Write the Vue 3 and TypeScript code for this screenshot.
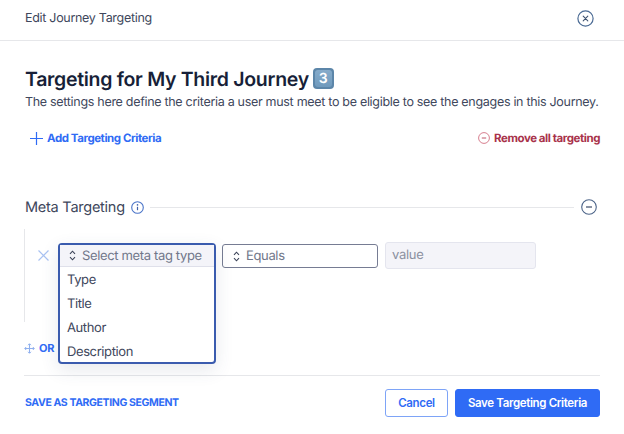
<script setup lang="ts">
const options: string[] = ['Type', 'Title', 'Author', 'Description']
</script>

<template>
  <div class="page">
    <header class="top">
      <span class="top-title">Edit Journey Targeting</span>
      <svg class="close" width="17" height="17" viewBox="0 0 17 17" fill="none">
        <circle cx="8.5" cy="8.5" r="7.6" stroke="#4a6a94" stroke-width="1.2" />
        <path d="M6.2 6.2l4.6 4.6M10.8 6.2l-4.6 4.6" stroke="#3e5270" stroke-width="1.1" stroke-linecap="round" />
      </svg>
    </header>

    <section class="intro">
      <h1 class="heading">
        Targeting for My Third Journey
        <span class="keycap"><span class="keycap-inner">3</span></span>
      </h1>
      <p class="desc">The settings here define the criteria a user must meet to be eligible to see the engages in this Journey.</p>
    </section>

    <div class="actions">
      <a class="add">
        <svg width="13" height="13" viewBox="0 0 13 13" fill="none">
          <path d="M6.5 0v13M0 6.5h13" stroke="#2f6bf5" stroke-width="1.2" />
        </svg>
        Add Targeting Criteria
      </a>
      <a class="remove">
        <svg width="12" height="12" viewBox="0 0 12 12" fill="none">
          <circle cx="6" cy="6" r="5.4" stroke="#d77f8f" stroke-width="1" />
          <path d="M3.8 6h4.4" stroke="#c0566b" stroke-width="1" />
        </svg>
        Remove all targeting
      </a>
    </div>

    <section class="meta">
      <div class="meta-head">
        <span class="meta-title">Meta Targeting</span>
        <svg class="info" width="13" height="13" viewBox="0 0 13 13" fill="none">
          <circle cx="6.5" cy="6.5" r="5.8" stroke="#4a74c8" stroke-width="1.1" />
          <path d="M6.5 5.8v3.4" stroke="#3f5fa8" stroke-width="1.2" />
          <circle cx="6.5" cy="3.9" r="0.8" fill="#3f5fa8" />
        </svg>
        <span class="rule"></span>
        <svg width="16" height="16" viewBox="0 0 16 16" fill="none">
          <circle cx="8" cy="8" r="7.3" stroke="#4c6488" stroke-width="1.1" />
          <path d="M5 8h6" stroke="#3c4c68" stroke-width="1.2" />
        </svg>
      </div>

      <div class="group">
        <div class="row">
          <svg class="x" width="11" height="11" viewBox="0 0 11 11" fill="none">
            <path d="M.5.5l10 10M10.5.5l-10 10" stroke="#a9c2f2" stroke-width="1.2" />
          </svg>
          <div class="select-slot">
            <div class="dropdown">
              <div class="dropdown-head">
                <svg class="updown" width="7" height="11" viewBox="0 0 7 11" fill="none">
                  <path d="M1 3.8L3.5 1.2 6 3.8M1 7.2l2.5 2.6L6 7.2" stroke="#3b4358" stroke-width="1.1" />
                </svg>
                Select meta tag type
              </div>
              <div class="options">
                <div v-for="o in options" :key="o" class="option">{{ o }}</div>
              </div>
            </div>
          </div>
          <div class="equals">
            <svg class="updown" width="7" height="11" viewBox="0 0 7 11" fill="none">
              <path d="M1 3.8L3.5 1.2 6 3.8M1 7.2l2.5 2.6L6 7.2" stroke="#3b4358" stroke-width="1.1" />
            </svg>
            Equals
          </div>
          <div class="value">value</div>
        </div>
      </div>
      <div class="or">
        <svg width="11" height="11" viewBox="0 0 11 11" fill="none">
          <path d="M5.5 1v9M1 5.5h9" stroke="#8fb0ee" stroke-width="1.1" />
          <path d="M4 2.2l1.5-1.5L7 2.2M4 8.8l1.5 1.5L7 8.8M2.2 4L.7 5.5 2.2 7M8.8 4l1.5 1.5L8.8 7" stroke="#8fb0ee" stroke-width="1" />
        </svg>
        <span>OR</span>
      </div>
    </section>

    <footer class="foot">
      <a class="segment">SAVE AS TARGETING SEGMENT</a>
      <div class="btns">
        <button class="cancel">Cancel</button>
        <button class="save">Save Targeting Criteria</button>
      </div>
    </footer>
  </div>
</template>

<style>
html, body { margin: 0; background: #fff; }
</style>

<style scoped>
.page {
  width: 624px;
  height: 434px;
  overflow: hidden;
  font-family: Inter, "Liberation Sans", sans-serif;
  text-rendering: geometricPrecision;
  color: #40475c;
  background: #fff;
  box-sizing: border-box;
}
.top {
  height: 41px;
  box-sizing: border-box;
  border-bottom: 1px solid #e6e7ea;
  display: flex;
  align-items: center;
  justify-content: space-between;
  padding: 0 30px 3px 25px;
}
.top-title { font-size: 12.5px; letter-spacing: -0.3px; color: #40475c; }
.intro { padding: 25px 24px 0 25px; }
.heading {
  margin: 0;
  font-size: 19.5px;
  line-height: 26px;
  font-weight: 600;
  letter-spacing: -0.3px;
  color: #171f38;
  display: flex;
  align-items: center;
  gap: 4px;
  white-space: nowrap;
}
.keycap {
  width: 21px;
  height: 21px;
  margin-top: -2px;
  border-radius: 4px;
  background: #5c86a9;
  display: flex;
  align-items: center;
  justify-content: center;
}
.keycap-inner {
  width: 17px;
  height: 17px;
  border-radius: 3px;
  background: linear-gradient(#86abca, #6f9abd);
  color: #fff;
  font-size: 14px;
  line-height: 17px;
  font-weight: 600;
  letter-spacing: 0;
  text-align: center;
}
.desc { margin: 2px 0 0; font-size: 12.5px; letter-spacing: -0.3px; line-height: 18px; color: #40475c; white-space: nowrap; }
.actions {
  display: flex;
  justify-content: space-between;
  align-items: center;
  padding: 19px 24px 0 30px;
  font-size: 11.5px;
  font-weight: 700;
  letter-spacing: -0.44px;
}
.add, .remove { display: flex; align-items: center; gap: 4px; }
.add { color: #2f6bf5; }
.remove { color: #a8324a; }
.meta { padding: 52px 24px 0 25px; }
.meta-head { display: flex; align-items: center; height: 20px; margin-right: 3px; }
.meta-title { font-size: 14.5px; letter-spacing: -0.25px; color: #40475c; }
.info { margin-left: 6px; }
.rule { flex: 1; height: 1px; background: #e6e7ea; margin: 0 7px 0 6px; }
.group {
  margin: 12px 0 0 -1px;
  height: 93px;
  border-left: 1px solid #e6e7ea;
  box-sizing: border-box;
  padding: 14px 0 0 13px;
}
.row { display: flex; align-items: flex-start; }
.x { margin-top: 7px; margin-right: 9px; flex: none; }
.select-slot { width: 158px; height: 25px; position: relative; flex: none; margin-right: 6px; }
.dropdown {
  position: absolute;
  left: 0;
  top: 0;
  width: 158px;
  height: 121px;
  box-sizing: border-box;
  border: 2px solid #3a5bae;
  border-radius: 4px;
  background: #fff;
  box-shadow: 0 6px 18px rgba(60, 70, 110, 0.12);
  z-index: 2;
}
.dropdown-head {
  height: 22px;
  background: #f4f4f9;
  border-bottom: 1px solid #dfe0ea;
  box-sizing: border-box;
  display: flex;
  align-items: center;
  padding-left: 9px;
  gap: 6px;
  font-size: 13px;
  letter-spacing: -0.35px;
  color: #71778a;
}
.options { padding-top: 1px; }
.option {
  height: 24px;
  line-height: 24px;
  padding-left: 7px;
  font-size: 13px;
  letter-spacing: -0.4px;
  color: #40475c;
}
.updown { flex: none; }
.equals {
  width: 156px;
  height: 24px;
  margin-top: 1px;
  box-sizing: border-box;
  border: 1px solid #767c93;
  border-radius: 3px;
  display: flex;
  align-items: center;
  padding-left: 10px;
  gap: 6px;
  font-size: 13px;
  letter-spacing: -0.35px;
  color: #71778a;
  margin-right: 7px;
  flex: none;
}
.value {
  width: 151px;
  height: 27px;
  margin-top: -1px;
  box-sizing: border-box;
  background: #f4f4f9;
  border: 1px solid #e4e5ee;
  border-radius: 3px;
  line-height: 25px;
  padding-left: 6px;
  font-size: 13px;
  letter-spacing: -0.3px;
  color: #8b90a0;
  flex: none;
}
.or {
  display: flex;
  align-items: center;
  gap: 4px;
  margin-top: 19px;
  margin-left: -1px;
  font-size: 11px;
  font-weight: 700;
  letter-spacing: -0.3px;
  color: #2f6bf5;
  height: 14px;
}
.foot {
  margin: 20px 24px 0 24px;
  border-top: 1px solid #e6e7ea;
  padding-top: 13px;
  display: flex;
  justify-content: space-between;
  align-items: center;
}
.segment { font-size: 10.5px; font-weight: 700; color: #2f6bf5; letter-spacing: -0.38px; margin: -2px 0 0 1px; }
.btns { display: flex; gap: 7px; }
button { font-family: inherit; font-size: 11.5px; font-weight: 600; letter-spacing: -0.35px; border-radius: 3px; height: 28px; box-sizing: border-box; white-space: nowrap; padding: 0; }
.cancel { width: 63px; background: #fff; color: #2f6bf5; border: 1px solid #7ea4f7; }
.save { width: 145px; background: #2f6bf5; color: #fff; border: 1px solid #2f6bf5; }
</style>
